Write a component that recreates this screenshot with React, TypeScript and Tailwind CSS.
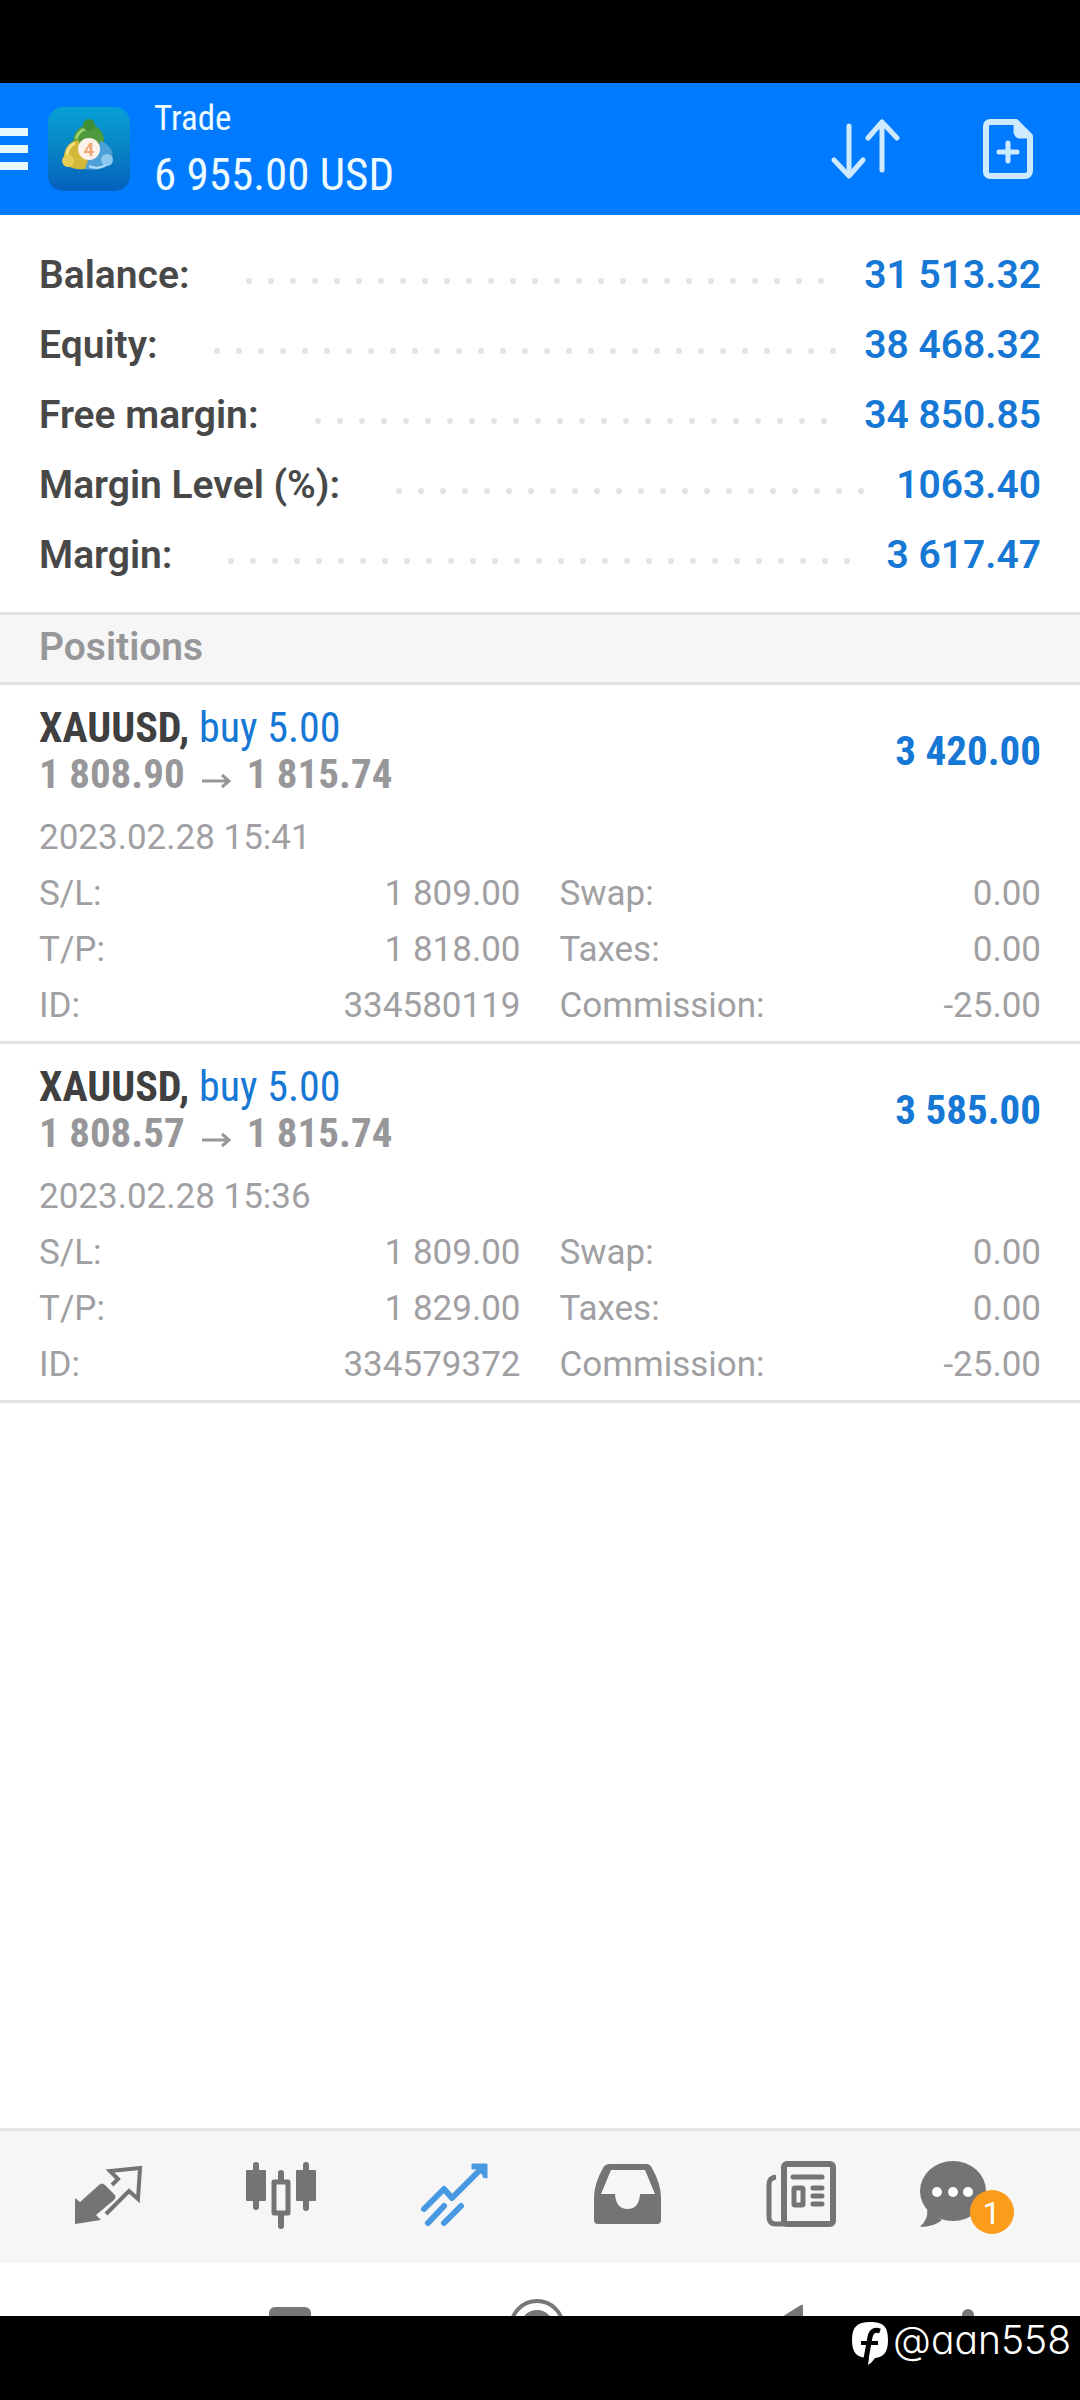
import type { ReactNode } from "react";

const summary = [
  { label: "Balance:", value: "31 513.32" },
  { label: "Equity:", value: "38 468.32" },
  { label: "Free margin:", value: "34 850.85" },
  { label: "Margin Level (%):", value: "1063.40" },
  { label: "Margin:", value: "3 617.47" },
];

const positions = [
  {
    id: "334580119",
    symbol: "XAUUSD",
    side: "buy 5.00",
    open: "1 808.90",
    current: "1 815.74",
    profit: "3 420.00",
    time: "2023.02.28 15:41",
    sl: "1 809.00",
    tp: "1 818.00",
    swap: "0.00",
    taxes: "0.00",
    commission: "-25.00",
  },
  {
    id: "334579372",
    symbol: "XAUUSD",
    side: "buy 5.00",
    open: "1 808.57",
    current: "1 815.74",
    profit: "3 585.00",
    time: "2023.02.28 15:36",
    sl: "1 809.00",
    tp: "1 829.00",
    swap: "0.00",
    taxes: "0.00",
    commission: "-25.00",
  },
];

type Position = (typeof positions)[number];

function AppLogo() {
  return (
    <svg width="82" height="84" viewBox="0 0 82 84" aria-hidden="true">
      <defs>
        <linearGradient id="logoBg" x1="0" y1="0" x2="0" y2="1">
          <stop offset="0" stopColor="#06a0d6" />
          <stop offset="0.5" stopColor="#0883c4" />
          <stop offset="1" stopColor="#0560bd" />
        </linearGradient>
      </defs>
      <rect width="82" height="84" rx="15" fill="url(#logoBg)" />
      {/* three traders round the table */}
      <path d="M25 36c0-11 7-18 16-18s16 7 15 19l-6 3H31z" fill="#4f9a3c" />
      <path d="M28 32c2-6 6-10 11-10" stroke="#9ccf6a" strokeWidth="3" fill="none" />
      <circle cx="41" cy="18" r="6" fill="#3f8f35" />
      <path d="M30 33c-10 2-15 10-14 20 3 9 13 10 22 9l3-8z" fill="#d2b83a" />
      <path d="M27 36c-5 3-8 7-8 12" stroke="#f3e27d" strokeWidth="3" fill="none" />
      <circle cx="20" cy="54" r="6" fill="#e6cb55" />
      <path d="M53 34c9 4 13 10 11 19-3 9-16 11-27 9l4-12z" fill="#4d9fd8" />
      <circle cx="59" cy="53" r="6" fill="#8cc8ee" />
      <path d="M41 59c6 3 12 2 17-1" stroke="#b2dcf5" strokeWidth="2" fill="none" />
      <circle cx="41" cy="42" r="11" fill="#fdf3ea" />
      <text x="41" y="49" textAnchor="middle" fontSize="19" fontWeight="700" fill="#f0a877">4</text>
    </svg>
  );
}

function Header() {
  return (
    <header className="flex h-[132px] items-center bg-[#007aff] text-white">
      <button aria-label="Menu" className="flex w-7 flex-col gap-[9px]">
        <span className="h-2 bg-[#e9faff]" />
        <span className="h-2 bg-[#e9faff]" />
        <span className="h-2 bg-[#e9faff]" />
      </button>
      <div className="ml-5">
        <AppLogo />
      </div>
      <div className="ml-6 flex-1 font-['Roboto_Condensed','Liberation_Sans_Narrow',Roboto,sans-serif] text-[#edfaff]">
        <h1 className="text-[35px] leading-[52px]">Trade</h1>
        <p className="text-[45px] leading-[60px]">6 955.00 USD</p>
      </div>
      <button aria-label="Sort" className="mr-[82px]">
        <svg width="70" height="64" viewBox="0 0 70 64" fill="none" stroke="#cdeaff" strokeWidth="5" strokeLinecap="round" strokeLinejoin="round">
          <path d="M19 9v49M4 43l15 16 14-16M52 53V6M38 21L52 5l15 16" />
        </svg>
      </button>
      <button aria-label="New order" className="mr-[46px]">
        <svg width="52" height="64" viewBox="0 0 52 64" fill="none" stroke="#cdeaff" strokeWidth="6" strokeLinejoin="round">
          <path d="M8 5h26l14 14v35a5 5 0 0 1-5 5H8a4 4 0 0 1-4-4V9a4 4 0 0 1 4-4z" />
          <path d="M33 5v10a5 5 0 0 0 5 5h10z" fill="#cdeaff" strokeWidth="3" />
          <path d="M26 26v18M17 35h18" strokeWidth="5" strokeLinecap="round" />
        </svg>
      </button>
    </header>
  );
}

function Leader() {
  // dots that do not fit wrap below the clipped line
  return (
    <span className="mt-3 ml-[56px] mr-[26px] flex h-[6px] flex-1 flex-wrap gap-x-4 overflow-hidden" aria-hidden="true">
      {Array.from({ length: 40 }, (_, i) => (
        <span key={i} className="h-[6px] w-[6px] rounded-full bg-[#e3e3e3]" />
      ))}
    </span>
  );
}

function Summary() {
  return (
    <dl className="px-[39px] pt-[25px] pb-[22px] text-[39px] leading-[70px] font-semibold">
      {summary.map((row) => (
        <div key={row.label} className="flex items-center">
          <dt className="text-[#484848]">{row.label}</dt>
          <Leader />
          <dd className="text-[#1678d4]">{row.value}</dd>
        </div>
      ))}
    </dl>
  );
}

function Detail({ label, value }: { label: string; value: string }) {
  return (
    <div className="flex justify-between">
      <dt>{label}</dt>
      <dd>{value}</dd>
    </div>
  );
}

function PositionItem({ p }: { p: Position }) {
  return (
    <li className="border-b-[3px] border-[#e2e2e2] px-[39px] pt-[19px] pb-[7px]">
      <div className="flex items-center justify-between font-['Roboto_Condensed','Liberation_Sans_Narrow',Roboto,sans-serif] text-[41px] leading-[47px]">
        <div>
          <p className="text-[42px]">
            <span className="font-bold text-[#404040]">{p.symbol},</span>{" "}
            <span className="text-[#1678d4]">{p.side}</span>
          </p>
          <p className="flex items-center font-bold text-[#97979a]">
            {p.open}
            <svg className="mx-4 mt-3" width="30" height="16" viewBox="0 0 30 16" fill="none" stroke="currentColor" strokeWidth="3" role="img" aria-label="to">
              <path d="M1 8h26M21 2l7 6-7 6" />
            </svg>
            {p.current}
          </p>
        </div>
        <p className="font-bold text-[#1678d4]">{p.profit}</p>
      </div>
      <div className="mt-3 text-[35px] leading-[56px] text-[#a0a0a3]">
        <p>{p.time}</p>
        <dl className="grid grid-cols-2 gap-x-[39px]">
          <Detail label="S/L:" value={p.sl} />
          <Detail label="Swap:" value={p.swap} />
          <Detail label="T/P:" value={p.tp} />
          <Detail label="Taxes:" value={p.taxes} />
          <Detail label="ID:" value={p.id} />
          <Detail label="Commission:" value={p.commission} />
        </dl>
      </div>
    </li>
  );
}

function TabIcon({ children }: { children: ReactNode }) {
  return (
    <svg width="72" height="72" viewBox="0 0 72 72" fill="none" stroke="currentColor">
      {children}
    </svg>
  );
}

function TabBar() {
  return (
    <nav className="grid grid-cols-6 justify-items-center border-t-[3px] border-[#e4e4e4] bg-[#f6f6f6] px-[21px] pt-[27px] pb-[33px] text-[#747474]">
      <button aria-label="Quotes">
        <TabIcon>
          <path d="M3 66V40l5 4 19-17q3-3 6 0l9 9q3 3 0 6L24 57l5 5z" fill="currentColor" stroke="none" />
          <path d="M40 27l6-6-8-8 30-3-2 31-9-8-23 23" strokeWidth="4" />
        </TabIcon>
      </button>
      <button aria-label="Charts">
        <TabIcon>
          <path d="M11 7v42M36 15v8M36 57v11M61 7v43" strokeWidth="6" strokeLinecap="round" />
          <rect x="1" y="12" width="20" height="31" rx="1" fill="currentColor" stroke="none" />
          <rect x="51" y="12" width="20" height="31" rx="1" fill="currentColor" stroke="none" />
          <rect x="29" y="24" width="14" height="31" strokeWidth="5" strokeLinejoin="round" />
        </TabIcon>
      </button>
      <button aria-label="Trade" className="text-[#4999e2]">
        <TabIcon>
          <path d="M6 51l20-20 8 9 30-30M26 48L10 65M43 48L26 65" strokeWidth="6" strokeLinecap="round" strokeLinejoin="round" />
          <path d="M54 6h15v14l-4-1V11H54z" fill="currentColor" strokeWidth="1" />
          <path d="M57 9h10v10z" fill="currentColor" strokeWidth="1" />
        </TabIcon>
      </button>
      <button aria-label="History">
        <TabIcon>
          <path
            d="M19 6h36q4 0 6 4 9 16 9 30v22q0 4-4 4H7q-4 0-4-4V40q0-14 9-30 2-4 7-4zM20 12L10 36h14q1 15 12.500 15T49 36h15L54 12z"
            fill="currentColor"
            fillRule="evenodd"
            stroke="none"
          />
        </TabIcon>
      </button>
      <button aria-label="News">
        <TabIcon>
          <rect x="20" y="6" width="49" height="60" rx="3" strokeWidth="6" />
          <path d="M12 19q-7 1-7 7v33q0 7 7 7h10" strokeWidth="5" />
          <path d="M29 19h29M49 30h9M49 38h9M49 46h9" strokeWidth="5" strokeLinecap="round" />
          <rect x="30" y="30" width="9" height="17" rx="1" strokeWidth="5" />
        </TabIcon>
      </button>
      <button aria-label="Messages, 1 new" className="relative mr-[42px]">
        <TabIcon>
          <ellipse cx="37" cy="33" rx="33" ry="30" fill="currentColor" stroke="none" />
          <path d="M11 52q2 8-7 17 14 0 22-7z" fill="currentColor" stroke="none" />
          <circle cx="21" cy="34" r="5" fill="#fff" stroke="none" />
          <circle cx="37" cy="34" r="5" fill="#fff" stroke="none" />
          <circle cx="52" cy="34" r="5" fill="#fff" stroke="none" />
        </TabIcon>
        <span className="absolute top-8 left-[54px] h-11 w-11 rounded-full bg-[#fb9d1b] text-center text-[32px] leading-[46px] text-white">
          1
        </span>
      </button>
    </nav>
  );
}

function SystemNav() {
  return (
    <div className="grid h-[53px] grid-cols-[247fr_247fr_247fr_121fr] items-start justify-items-center overflow-hidden pr-[52px] pl-[166px] text-[#777777]">
      <button aria-label="Recent apps" className="mt-[44px] h-[42px] w-[42px] rounded-md bg-[#777777]" />
      <button aria-label="Home" className="mt-9">
        <svg width="56" height="56" viewBox="0 0 56 56" fill="none" stroke="currentColor" strokeWidth="4">
          <circle cx="28" cy="28" r="26" />
          <circle cx="28" cy="28" r="15" fill="currentColor" />
        </svg>
      </button>
      <button aria-label="Back" className="mt-[41px]">
        <svg width="38" height="48" viewBox="0 0 38 48" fill="currentColor">
          <path d="M36 1q2-1 2 1v44q0 2-2 1L2 26q-2-2 0-4z" />
        </svg>
      </button>
      <button aria-label="Accessibility" className="mt-[46px]">
        <svg width="40" height="40" viewBox="0 0 40 40" fill="currentColor">
          <circle cx="20" cy="6" r="6" />
          <path d="M2 13h36v4H25v23h-4V29h-2v11h-4V17H2z" />
        </svg>
      </button>
    </div>
  );
}

function Watermark() {
  return (
    <footer className="flex h-[84px] items-start justify-end gap-1 bg-black pr-[9px] text-white">
      <svg className="mt-[6px]" width="37" height="43" viewBox="0 0 37 43" aria-hidden="true">
        <path d="M18 0c14 0 18 5 18 18 0 12-4 17-13 18-2 3-4 5-7 7l1-7C5 36 0 31 0 18S5 0 18 0z" fill="#fff" />
        <path d="M28 9c-6-2-9 1-10 6l-4 22" stroke="#000" strokeWidth="5" fill="none" />
        <path d="M9 21h17" stroke="#000" strokeWidth="4" />
      </svg>
      <span className="font-[Inter,sans-serif] text-[39px] leading-[48px] font-light [font-feature-settings:'cv11']">@aan558</span>
    </footer>
  );
}

export default function App() {
  return (
    <div className="flex min-h-screen flex-col bg-white font-[Roboto,sans-serif]">
      <div className="h-[83px] bg-black" />
      <Header />
      <main className="flex-1">
        <Summary />
        <h2 className="border-y-[3px] border-[#e2e2e2] bg-[#f6f6f6] px-[39px] pb-[3px] text-[39px] leading-[64px] font-semibold text-[#97979a]">
          Positions
        </h2>
        <ul>
          {positions.map((p) => (
            <PositionItem key={p.id} p={p} />
          ))}
        </ul>
      </main>
      <TabBar />
      <SystemNav />
      <Watermark />
    </div>
  );
}
